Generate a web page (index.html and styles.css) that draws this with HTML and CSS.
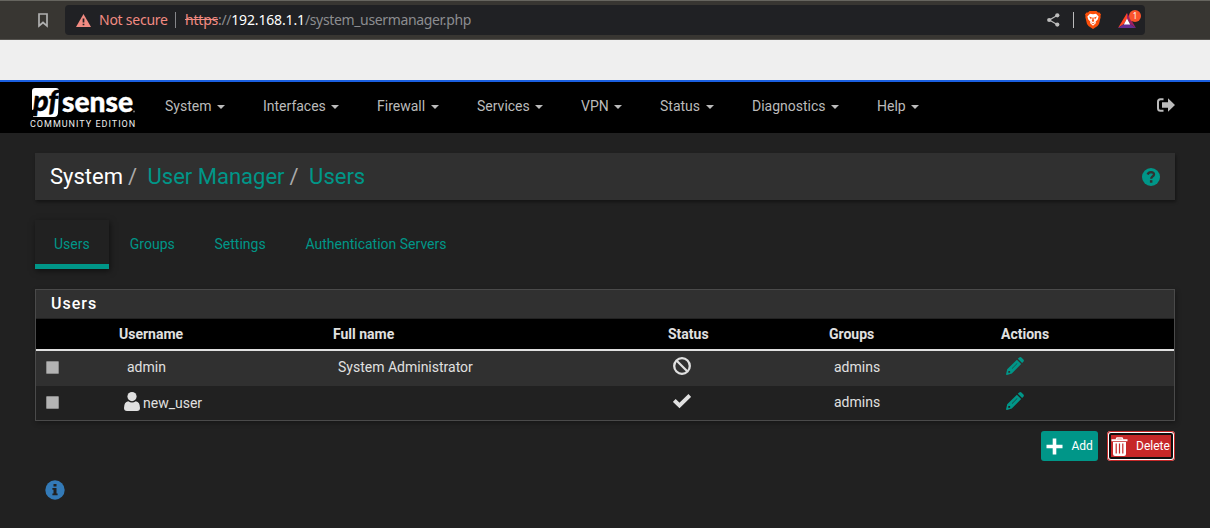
FILE: index.html
```html
<!DOCTYPE html>
<html lang="en">
<head>
<meta charset="utf-8">
<title>System: User Manager: Users</title>
<link rel="stylesheet" href="styles.css">
</head>
<body>
<svg class="defs" width="0" height="0">
  <symbol id="pencil" viewBox="0 0 18 18"><path fill="currentColor" fill-rule="evenodd" d="M11.800 1.800 13.200.5Q14.300-.4 15.400.5L17.400 2.500Q18.400 3.600 17.400 4.700L16.100 6.100ZM10.900 2.700 15.200 7 5.800 16.600 1 17.900Q0 18.100.1 17.100L1.200 12.300ZM11 6.200 6 11.200Q5.700 11.700 6.200 11.700L11.400 6.600ZM2.500 13.900 2.100 15.300 2.900 16 4.200 15.600 4.100 14.100Z"/></symbol>
</svg>
<div class="browser">
  <svg class="bookmark" width="12" height="16" viewBox="0 0 12 16"><path d="M2 2H10V14L6 10.500 2 14Z" fill="none" stroke="#b0b0b0" stroke-width="1.700"/></svg>
  <div class="address">
    <svg class="warning" width="15" height="13" viewBox="0 0 15 13"><path d="M7.500 0 15 13H0Z" fill="#f28b82"/><path d="M7.500 4.500V8.500M7.500 9.700V11.300" stroke="#202124" stroke-width="1.700"/></svg>
    <span class="insecure">Not secure</span>
    <span class="separator"></span>
    <span class="url"><s>https</s>://<b>192.168.1.1</b>/system_usermanager.php</span>
    <span class="tools">
      <svg width="13" height="14" viewBox="0 0 13 14" fill="#bdbdbd"><path d="M10.500 2.200 2.300 7 10.500 11.800" fill="none" stroke="#bdbdbd" stroke-width="1.200"/><circle cx="10.300" cy="2.300" r="2.100"/><circle cx="2.200" cy="7" r="2.100"/><circle cx="10.300" cy="11.600" r="2.100"/></svg>
      <span class="separator light"></span>
      <svg class="shield" width="16" height="18" viewBox="0 0 16 18"><path d="M4.500 0H11.500L13 1.500 14.500 1.400 16 3.500 15.400 5 15.700 6 14 13 12.500 15 8 18 3.500 15 2 13 .3 6 .6 5 0 3.500 1.500 1.400 3 1.500Z" fill="#fb4f0a"/><path d="M5 2.700 8 3.200 11 2.700 13.600 5.500 12.700 8.500 10.500 10.800 11 12 8 14.800 5 12 5.500 10.800 3.300 8.500 2.400 5.500Z" fill="#fff"/><path d="M4 5.600 6.900 6.400 6 8.400ZM12 5.600 9.100 6.400 10 8.400ZM7.400 6.500H8.600L8.800 9 9.400 10 8 10.900 6.600 10 7.200 9ZM5.500 11.300 8 12.200 10.500 11.300 8 13.200Z" fill="#fb4f0a"/></svg>
      <span class="rewards">
        <svg width="18" height="15" viewBox="0 0 18 15"><path d="M9 0 0 15 6 11 9 5.500Z" fill="#ff4724"/><path d="M9 0 18 15 12 11 9 5.500Z" fill="#9e1f63"/><path d="M0 15H18L12 11H6Z" fill="#662d91"/><path d="M9 5.500 12.200 11.500H5.800Z" fill="#fff"/></svg>
        <span class="badge">1</span>
      </span>
    </span>
  </div>
</div>
<div class="blank"></div>
<header class="navbar">
  <div class="brand">
    <svg class="logo" width="108" height="31" viewBox="0 0 108 31"><path d="M5 0H26Q29 0 28.900 3L28 25Q27.600 29 24 29H3L5 21 2 22V3Q2 0 5 0Z" fill="#fff"/><text class="logo-pf" x="3" y="23" textLength="25" lengthAdjust="spacingAndGlyphs">pf</text><text class="logo-sense" x="32" y="24" textLength="71" lengthAdjust="spacingAndGlyphs">sense</text><circle cx="104" cy="23.500" r="1" fill="#777"/></svg>
    <span class="edition">COMMUNITY EDITION</span>
  </div>
  <nav class="menu">
    <a>System</a><a>Interfaces</a><a>Firewall</a><a>Services</a><a>VPN</a><a>Status</a><a>Diagnostics</a><a>Help</a>
  </nav>
  <svg class="logout" width="18" height="14" viewBox="0 0 18 14"><path d="M6.500 1.200H3.500Q1 1.200 1 3.700V10.300Q1 12.800 3.500 12.800H6.500" fill="none" stroke="#bbb" stroke-width="2"/><path d="M5 4.200H11V.3L18 7 11 13.700V9.800H5Z" fill="#bbb"/></svg>
</header>
<main>
  <div class="crumbs">
    <span class="current">System</span><i>/</i><a>User Manager</a><i>/</i><a>Users</a>
    <svg class="help" width="18" height="18" viewBox="0 0 18 18"><circle cx="9" cy="9" r="9" fill="#009688"/><path d="M5.600 6.500Q6.500 4.200 9 4.200 12 4.300 12 6.600 11.900 7.700 10.500 8.500 9.200 9.300 9.200 10.800" fill="none" stroke="#303030" stroke-width="2.300"/><rect x="7.900" y="12.200" width="2.500" height="2.500" fill="#303030"/></svg>
  </div>
  <div class="tabs"><a class="active">Users</a><a>Groups</a><a>Settings</a><a>Authentication Servers</a></div>
  <section class="panel">
    <h2>Users</h2>
    <div class="row head"><span></span><span>Username</span><span>Full name</span><span>Status</span><span>Groups</span><span>Actions</span></div>
    <div class="row odd">
      <span class="box"></span><span class="name">admin</span><span class="full">System Administrator</span>
      <svg class="state" width="18" height="18" viewBox="0 0 18 18"><path d="M3.500 3.500 14.500 14.500" stroke="#e0e0e0" stroke-width="2.200"/><circle cx="9" cy="9" r="7.800" fill="none" stroke="#e0e0e0" stroke-width="2.300"/></svg>
      <span class="group">admins</span><svg class="edit" width="18" height="18"><use href="#pencil"/></svg>
    </div>
    <div class="row even">
      <span class="box"></span>
      <span class="with-icon"><svg width="16" height="19" viewBox="0 0 16 19" fill="#e0e0e0"><circle cx="8" cy="4.600" r="4.600"/><path d="M4.200 9.200Q8 12 11.800 9.200 16 10 16 16 16 19 13 19H3Q0 19 0 16 0 10 4.200 9.200Z"/></svg>new_user</span>
      <span></span>
      <svg class="state" width="18" height="18" viewBox="0 0 18 18"><path d="M1.300 8.500 6.500 13.500 16.800 3.500" fill="none" stroke="#e0e0e0" stroke-width="3.900"/></svg>
      <span class="group">admins</span><svg class="edit" width="18" height="18"><use href="#pencil"/></svg>
    </div>
  </section>
  <div class="buttons">
    <button class="add"><svg width="17" height="17" viewBox="0 0 17 17"><path d="M8.500.5V16.500M.5 8.500H16.500" stroke="#fff" stroke-width="3.600"/></svg>Add</button>
    <button class="delete"><svg width="17" height="19" viewBox="0 0 17 19"><path d="M5.200 2.500 6 .9H11L11.800 2.500" fill="none" stroke="#fff" stroke-width="1.500"/><path d="M.5 2.300H16.500V4.300H.5ZM2 5H15V17Q15 19 13 19H4Q2 19 2 17Z" fill="#fff"/><path d="M5.200 6.500V16.500M8.500 6.500V16.500M11.800 6.500V16.500" stroke="#c62828" stroke-width="1.200"/></svg>Delete</button>
  </div>
  <svg class="info" width="20" height="20" viewBox="0 0 20 20"><circle cx="10" cy="10" r="9.700" fill="#337ab7"/><path d="M8.500 4H11.500V6.500H8.500ZM7.400 8H11.500V13.500H12.600V15.200H7.400V13.500H8.500V9.700H7.400Z" fill="#212121"/></svg>
</main>
</body>
</html>
```
FILE: styles.css
```css
* { box-sizing: border-box; }
body { margin: 0; height: 528px; overflow: hidden; background: #212121; color: #e0e0e0; font: 14px/20px Roboto, sans-serif; }
svg { display: block; flex: none; }
.defs { position: absolute; }
.browser { display: flex; align-items: center; height: 40px; padding-left: 37px; background: #383632; border-top: 1px solid #66655f; border-bottom: 1px solid #55534f; }
.address { display: flex; align-items: center; width: 1080px; height: 30px; margin-left: 16px; padding-left: 11px; border-radius: 4px; background: #202124; font-family: "Noto Sans", sans-serif; font-size: 14px; }
.insecure { width: 68px; margin-left: 8px; color: #f28b82; white-space: nowrap; letter-spacing: -.25px; }
.separator { width: 1px; height: 16px; margin-left: 8px; background: #85868a; }
.url { margin-left: 9px; color: #8c8d90; white-space: nowrap; letter-spacing: -.35px; }
.url s { color: #f28b82; letter-spacing: -.2px; }
.url b { color: #fff; font-weight: 400; letter-spacing: -.15px; }
.tools { display: flex; align-items: center; margin-left: auto; padding-right: 9px; }
.separator.light { margin-left: 13px; background: #bbb; }
.shield { margin-left: 11px; }
.rewards { position: relative; margin-left: 17px; }
.badge { position: absolute; left: 11px; top: -3px; width: 12px; height: 12px; border-radius: 50%; background: #fb542b; color: #fff; font-size: 8px; line-height: 12px; text-align: center; }
.blank { height: 40px; background: #efefef; }
.navbar { display: flex; height: 53px; padding: 6px 35px 0 30px; border-top: 2px solid #1a5fe0; background: #000; }
.brand { display: flex; flex-direction: column; width: 108px; }
.logo { overflow: visible; }
.logo-pf { font: italic 900 28px Lato, sans-serif; fill: #000; stroke: #000; stroke-width: .5px; }
.logo-sense { font: 900 28px Lato, sans-serif; fill: #fff; stroke: #fff; stroke-width: .4px; }
.edition { color: #eee; font-size: 9px; line-height: 10px; letter-spacing: 1px; white-space: nowrap; }
.menu { display: grid; grid-template-columns: 98px 114px 100px 104px 79px 92px 125px 60px; margin-left: 27px; padding-top: 8px; color: #bbb; }
.menu a { display: flex; align-items: center; height: 20px; }
.menu a::after { content: ""; margin: 2px 0 0 5.500px; border: 4px solid transparent; border-top-color: #bbb; border-bottom: 0; }
.logout { margin: 10px 0 0 auto; }
main { padding: 20px 35px 0; }
.crumbs { display: flex; align-items: center; height: 47px; padding: 0 15px; background: #303030; box-shadow: 1px 2px 3px #0006; font-size: 22px; line-height: 26px; white-space: nowrap; }
.crumbs .current { color: #fff; }
.crumbs i { margin: 0 11px 0 5px; color: #aaa; font-style: normal; }
.crumbs i + a { margin-left: -.5px; }
.crumbs a, .tabs { color: #009688; }
.help { margin-left: auto; }
.tabs { display: flex; height: 49px; margin-top: 20px; }
.tabs a { display: flex; align-items: center; padding: 0 19px 2px 20.8px; }
.tabs .active { width: 74px; padding: 3px 0 0 19px; border-bottom: 5px solid #009688; box-shadow: 1px 2px 6px #0008; }
.panel { height: 132px; margin-top: 20px; border: 1px solid #4a4a4a; box-shadow: 1px 2px 5px #0005; }
h2 { height: 29px; margin: 0; padding-left: 15px; background: #303030; border-bottom: 1px solid #222; color: #fff; font-size: 16px; font-weight: 500; line-height: 28px; letter-spacing: 1px; }
.row { display: grid; grid-template-columns: 83px 214px 335px 161px 172px 1fr; height: 34px; align-items: center; }
.head { height: 32px; border-bottom: 2px solid #e0e0e0; background: #000; font-weight: 700; }
.odd { height: 35px; padding-bottom: 3px; background: #303030; }
.even { padding-bottom: 2px; }
.box { width: 13px; height: 13px; margin: 1px 0 0 10px; border: 1px solid #8a8a8a; border-radius: 1px; background: #b3b3b3; }
.name { padding-left: 8px; }
.full, .group { padding-left: 5px; }
.state, .edit { margin-left: 5px; margin-top: -2px; }
.edit { color: #009688; }
.with-icon { display: flex; align-items: center; gap: 3px; padding: 1px 0 0 5px; }
.with-icon svg { margin-top: -3px; }
.buttons { display: flex; justify-content: flex-end; gap: 9px; margin-top: 10px; }
button { display: flex; align-items: center; height: 30px; border: 0; border-radius: 3px; color: #fff; font: 12px/18px Roboto, sans-serif; }
.add { width: 57px; padding: 0 0 0 5px; gap: 8.500px; background: #009688; }
.delete { width: 68px; padding: 0 0 0 3.500px; gap: 8.500px; border-radius: 4px; background: #c62828; box-shadow: inset 0 0 0 1px #c62828, inset 0 0 0 2px #fff, inset 0 0 0 4px #101010; }
.info { margin: 19px 0 0 10px; }
```
